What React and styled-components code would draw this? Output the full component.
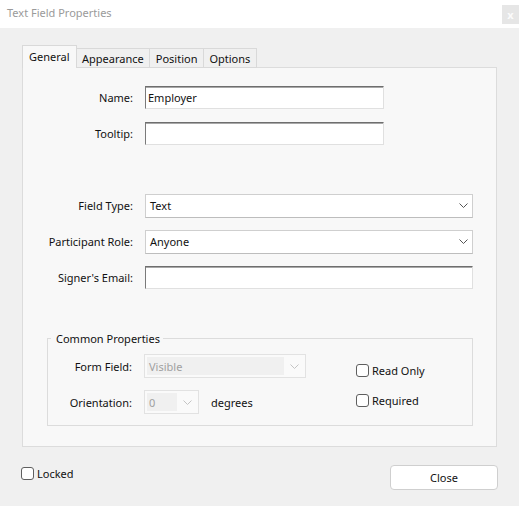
import React from 'react'
import styled, {createGlobalStyle} from 'styled-components'

const GlobalStyle = createGlobalStyle`
  html, body {
    margin: 0;
    padding: 0;
    background: #f0f0f0;
  }
  body {
    font-family: 'Segoe UI', 'Noto Sans', sans-serif;
    font-size: 11px;
    color: #1a1a1a;
  }
`

const Chevron = ({color}) => (
  <svg width='9' height='5' viewBox='0 0 9 5'>
    <path d='M0.5 0.5 L4.5 4.5 L8.5 0.5' fill='none' stroke={color || '#555'} strokeWidth='1' />
  </svg>
)

export default function App () {
  return (
    <Window>
      <GlobalStyle />
      <TitleBar>
        <Title>Text Field Properties</Title>
        <CloseBox>x</CloseBox>
      </TitleBar>
      <Body>
        <Tabs>
          <Tab active>General</Tab>
          <Tab>Appearance</Tab>
          <Tab>Position</Tab>
          <Tab>Options</Tab>
        </Tabs>
        <Panel>
          <Row>
            <Label>Name:</Label>
            <TextInput width={239}>Employer</TextInput>
          </Row>
          <Row gap={13}>
            <Label>Tooltip:</Label>
            <TextInput width={239} />
          </Row>
          <Row gap={49}>
            <Label>Field Type:</Label>
            <Select width={328}>
              <span>Text</span>
              <Chevron />
            </Select>
          </Row>
          <Row gap={13}>
            <Label>Participant Role:</Label>
            <Select width={328}>
              <span>Anyone</span>
              <Chevron />
            </Select>
          </Row>
          <Row gap={13}>
            <Label>Signer's Email:</Label>
            <TextInput width={328} />
          </Row>
          <Group>
            <Legend>Common Properties</Legend>
            <GroupBody>
              <GroupColumn>
                <GroupRow>
                  <GroupLabel>Form Field:</GroupLabel>
                  <DisabledSelect width={162}>
                    <DisabledValue>Visible</DisabledValue>
                    <Chevron color='#c4c4c4' />
                  </DisabledSelect>
                </GroupRow>
                <GroupRow>
                  <GroupLabel>Orientation:</GroupLabel>
                  <DisabledSelect width={55}>
                    <DisabledValue>0</DisabledValue>
                    <Chevron color='#c4c4c4' />
                  </DisabledSelect>
                  <Unit>degrees</Unit>
                </GroupRow>
              </GroupColumn>
              <CheckColumn>
                <CheckRow><Box />Read Only</CheckRow>
                <CheckRow><Box />Required</CheckRow>
              </CheckColumn>
            </GroupBody>
          </Group>
        </Panel>
        <Footer>
          <LockedRow><Box />Locked</LockedRow>
          <Button>Close</Button>
        </Footer>
      </Body>
    </Window>
  )
}

const Window = styled.div`
  width: 519px;
  height: 506px;
  display: flex;
  flex-direction: column;
`

const TitleBar = styled.div`
  height: 28px;
  background: #fff;
  display: flex;
  align-items: flex-start;
  justify-content: space-between;
`

const Title = styled.div`
  padding: 5px 0 0 7px;
  font-size: 11px;
  color: #9a9a9a;
`

const CloseBox = styled.div`
  margin-top: 5px;
  width: 17px;
  height: 19px;
  background: #e6e6e6;
  color: #fbfbfb;
  font-size: 11px;
  font-weight: bold;
  display: flex;
  align-items: center;
  justify-content: center;
`

const Body = styled.div`
  padding: 17px 22px 0 22px;
  display: flex;
  flex-direction: column;
`

const Tabs = styled.div`
  display: flex;
  align-items: flex-end;
  height: 23px;
  margin-bottom: -1px;
  position: relative;
  z-index: 1;
`

const Tab = styled.div`
  height: ${props => props.active ? '23px' : '20px'};
  box-sizing: border-box;
  padding: ${props => props.active ? '3px 6px 0' : '2px 5.5px 0'};
  border: 1px solid #d9d9d9;
  border-bottom: ${props => props.active ? 'none' : '1px solid #d9d9d9'};
  border-left: ${props => props.active ? '1px solid #d9d9d9' : 'none'};
  background: ${props => props.active ? '#f8f8f8' : '#f0f0f0'};
  color: #111;
  white-space: nowrap;
`

const Panel = styled.div`
  height: 380px;
  box-sizing: border-box;
  background: #f8f8f8;
  border: 1px solid #dcdcdc;
  padding-top: 18px;
`

const Row = styled.div`
  display: flex;
  align-items: center;
  height: 23px;
  margin-top: ${props => props.gap || 0}px;
`

const Label = styled.div`
  width: 110px;
  margin-right: 12px;
  text-align: right;
  color: #111;
`

const TextInput = styled.div`
  width: ${props => props.width}px;
  height: 23px;
  box-sizing: border-box;
  border: 1px solid;
  border-color: #6e6e6e #e0e0e0 #e0e0e0 #7a7a7a;
  box-shadow: inset 0 1px 0 #a8a8a8;
  background: #fff;
  padding: 3px 2px 0;
  color: #111;
`

const Select = styled.div`
  width: ${props => props.width}px;
  height: 24px;
  box-sizing: border-box;
  border: 1px solid #cfcfcf;
  border-bottom-color: #bdbdbd;
  background: #fff;
  display: flex;
  align-items: center;
  justify-content: space-between;
  padding: 0 4px 0 4px;
  color: #111;
`

const Group = styled.fieldset`
  margin: 42px 23px 0 24px;
  padding: 8px 0 11px 0;
  border: 1px solid #dcdcdc;
  min-width: 0;
`

const Legend = styled.legend`
  margin-left: 3px;
  padding: 0 3px 0 5px;
  color: #111;
`

const GroupBody = styled.div`
  display: flex;
`

const GroupColumn = styled.div`
  display: flex;
  flex-direction: column;
  gap: 12px;
`

const GroupRow = styled.div`
  display: flex;
  align-items: center;
  height: 24px;
`

const GroupLabel = styled.div`
  width: 84px;
  margin-right: 12px;
  text-align: right;
  color: #111;
`

const DisabledSelect = styled.div`
  width: ${props => props.width}px;
  height: 24px;
  box-sizing: border-box;
  border: 1px solid #e2e2e2;
  background: #fafafa;
  display: flex;
  align-items: center;
  padding: 2px 6px 2px 2px;
  gap: 6px;
`

const DisabledValue = styled.div`
  flex: 1;
  align-self: stretch;
  background: #f0f0f0;
  color: #a0a0a0;
  padding-left: 2px;
  display: flex;
  align-items: center;
`

const Unit = styled.div`
  margin-left: 12px;
  color: #111;
`

const CheckColumn = styled.div`
  margin-left: 50px;
  padding-top: 8px;
  display: flex;
  flex-direction: column;
  gap: 14px;
`

const CheckRow = styled.div`
  display: flex;
  align-items: center;
  height: 16px;
  color: #111;
`

const LockedRow = styled(CheckRow)`
  height: 14px;
  margin-top: 1px;
`

const Box = styled.span`
  width: 13px;
  height: 13px;
  box-sizing: border-box;
  border: 1px solid #5f5f5f;
  border-radius: 3px;
  background: #fff;
  margin-right: 3px;
`

const Footer = styled.div`
  display: flex;
  justify-content: space-between;
  align-items: flex-start;
  margin: 18px -1px 0 -1px;
`

const Button = styled.button`
  width: 108px;
  height: 25px;
  box-sizing: border-box;
  border: 1px solid #cfcfcf;
  border-radius: 4px;
  background: #fff;
  font: inherit;
  color: #111;
`
